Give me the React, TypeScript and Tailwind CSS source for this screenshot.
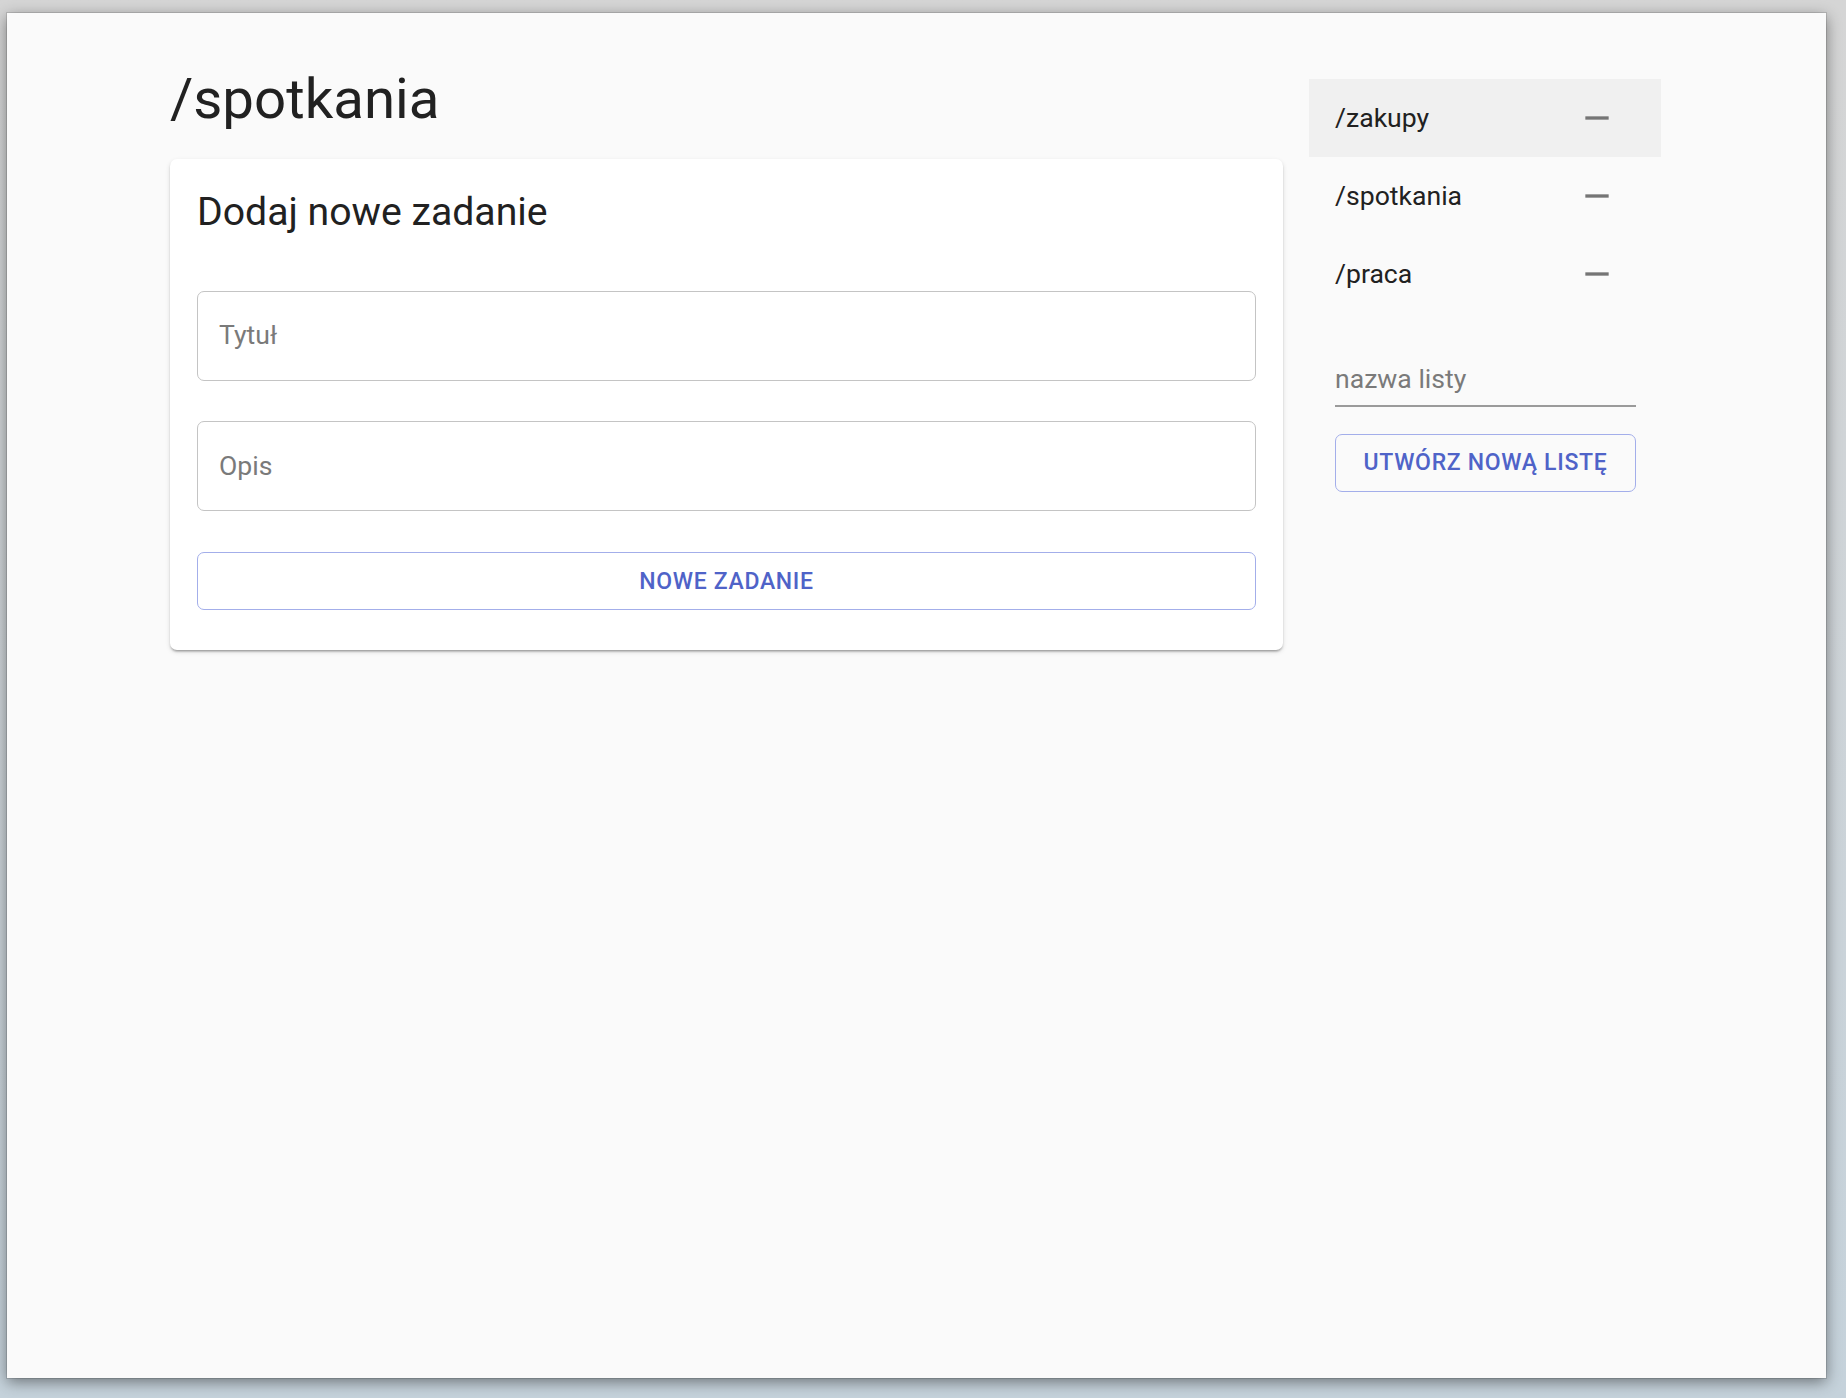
import React from "react"

const lists = [
  { name: "/zakupy", active: true },
  { name: "/spotkania", active: false },
  { name: "/praca", active: false },
]

const RemoveIcon = () => (
  <svg width="40" height="40" viewBox="0 0 24 24" fill="#757575">
    <path d="M19 13H5v-2h14v2z" />
  </svg>
)

const App = () => {
  return (
    <div
      className="w-[1846px] h-[1398px] bg-linear-to-b from-[#d5d5d5] to-[#c5d2db] pl-[7px] pt-[13px]"
      style={{ fontFamily: "Roboto, 'Noto Sans', sans-serif" }}
    >
      <div className="w-[1819px] h-[1365px] bg-[#fafafa] shadow-[0_0_0_1px_rgba(0,0,0,0.12),0_4px_14px_rgba(0,0,0,0.45)] flex">
        {/* main column */}
        <div className="ml-[163px] w-[1113px] pt-[53px]">
          <h1 className="text-[56.4px] leading-[67px] text-[#212121] font-normal">/spotkania</h1>

          <div className="mt-[26px] bg-white rounded-[7px] px-[27px] pt-[27px] pb-[40px] shadow-[0_3px_2px_-2px_rgba(0,0,0,0.2),0_2px_2px_0_rgba(0,0,0,0.14),0_2px_5px_0_rgba(0,0,0,0.12)]">
            <h2 className="text-[39.2px] leading-[52px] text-[#212121] font-normal">Dodaj nowe zadanie</h2>

            <div className="mt-[53px] flex flex-col gap-[40px]">
              <input
                placeholder="Tytuł"
                className="h-[90px] w-full border border-[#c4c4c4] rounded-[7px] px-[21px] pb-[3px] text-[26.6px] text-[#212121] placeholder:text-[#7a7a7a] outline-none bg-white"
              />
              <input
                placeholder="Opis"
                className="h-[90px] w-full border border-[#c4c4c4] rounded-[7px] px-[21px] pb-[2px] text-[26.6px] text-[#212121] placeholder:text-[#7a7a7a] outline-none bg-white"
              />
            </div>

            <button className="mt-[41px] h-[58px] w-full border border-[#a3aeea] rounded-[7px] pt-[2px] text-[23px] font-medium uppercase tracking-[0.03em] text-[#4f63c8] bg-white">
              Nowe zadanie
            </button>
          </div>
        </div>

        {/* sidebar */}
        <div className="ml-[26px] w-[352px] pt-[66px]">
          <ul>
            {lists.map((item) => (
              <li
                key={item.name}
                className={
                  "h-[78px] flex items-center justify-between pl-[26px] pr-[44px] " +
                  (item.active ? "bg-[#f0f0f0]" : "")
                }
              >
                <span className="text-[26.6px] text-[#212121]">{item.name}</span>
                <RemoveIcon />
              </li>
            ))}
          </ul>

          <div className="px-[26px]">
            <div className="mt-[50px] w-[301px] pb-[10px] border-b-2 border-[#9a9a9a]">
              <input
                placeholder="nazwa listy"
                className="w-full h-[32px] leading-[32px] text-[26.6px] bg-transparent outline-none text-[#212121] placeholder:text-[#7a7a7a]"
              />
            </div>

            <button className="mt-[27px] h-[58px] w-[301px] border border-[#a3aeea] rounded-[7px] text-[23px] font-medium uppercase tracking-[0.03em] text-[#4f63c8] bg-transparent">
              Utwórz nową listę
            </button>
          </div>
        </div>
      </div>
    </div>
  )
}

export default App
